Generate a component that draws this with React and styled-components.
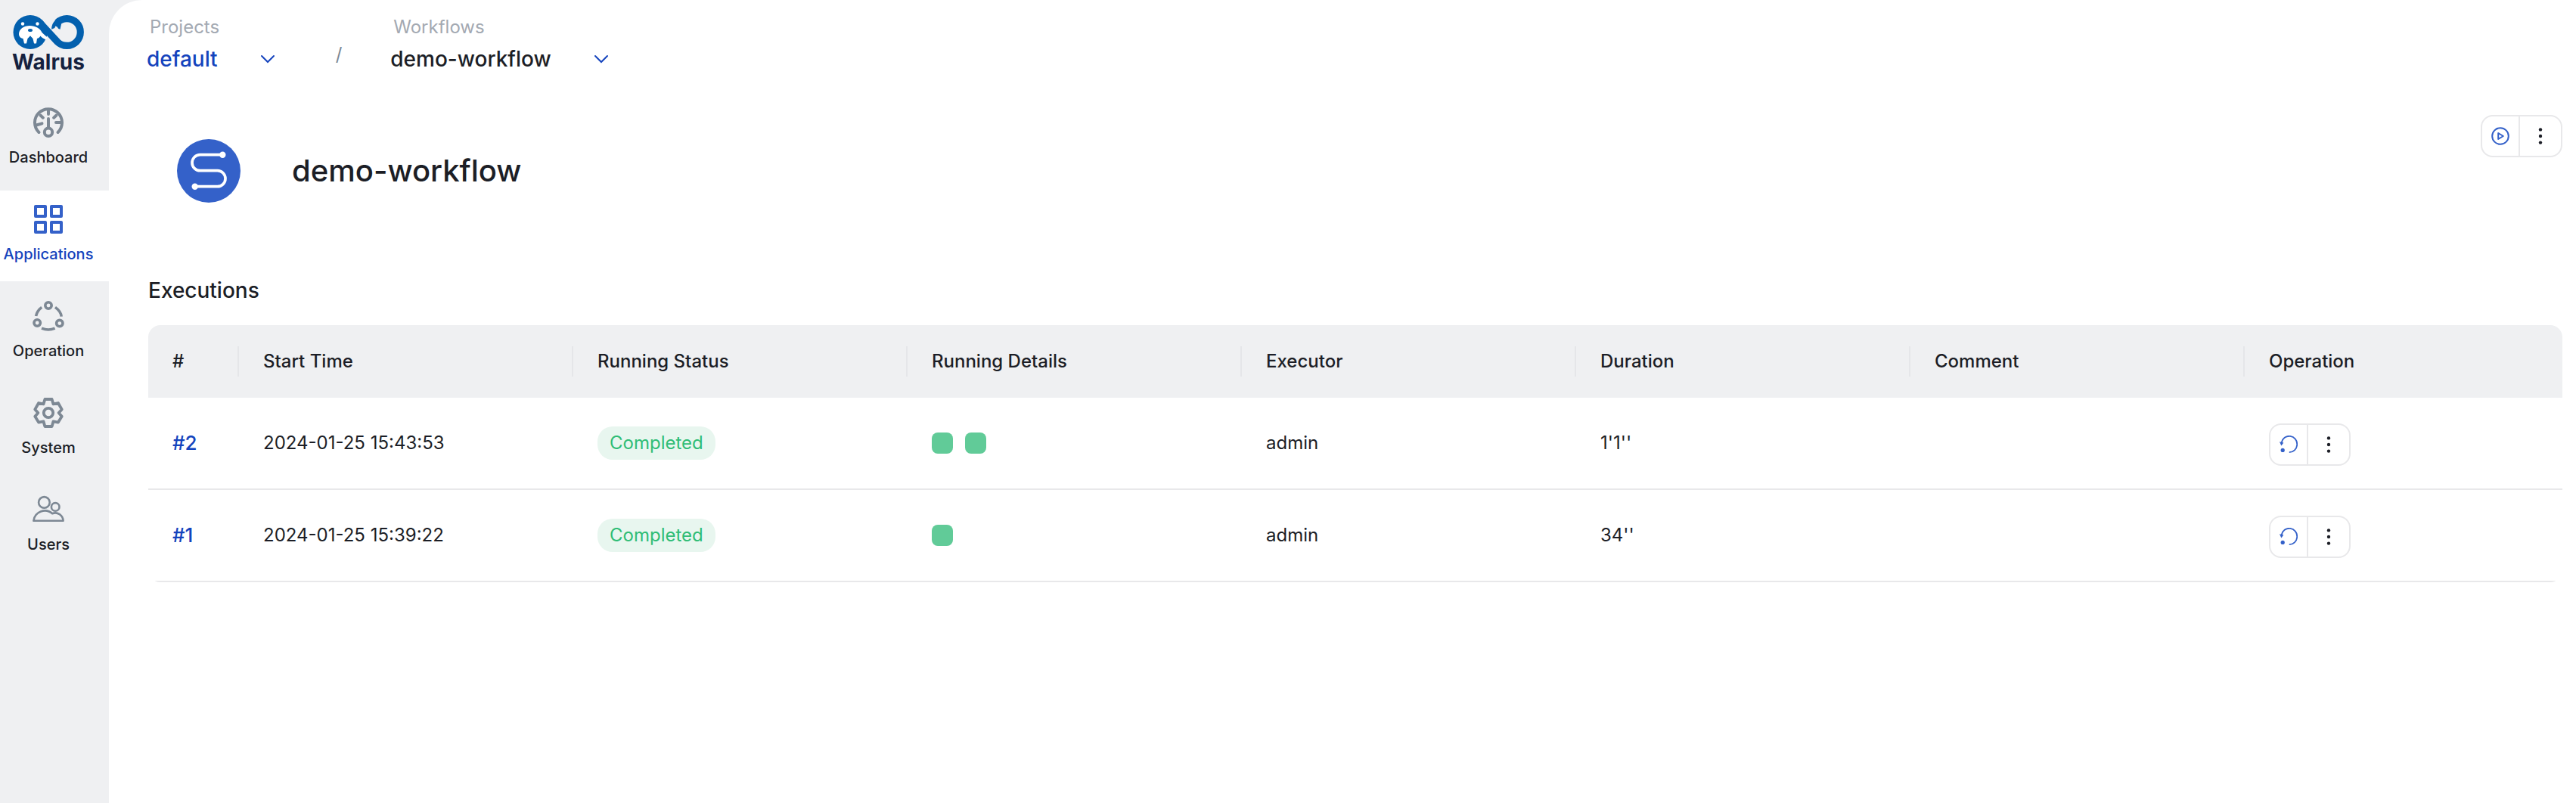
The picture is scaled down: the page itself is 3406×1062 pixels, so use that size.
import React from "react";
import styled, { createGlobalStyle } from "styled-components";

const color = {
  ink: "#1c1e26",
  muted: "#a3a9b2",
  icon: "#7d8894",
  primary: "#1443bd",
  accent: "#3461c9",
  panel: "#eff0f2",
  line: "#e8e8ea",
  success: "#2fbd76",
  successSoft: "#e8f6ef",
  successBlock: "#61cb98",
};

const GlobalStyle = createGlobalStyle`
  *, *::before, *::after { box-sizing: border-box; }
  body {
    margin: 0;
    background: ${color.panel};
    color: ${color.ink};
    font-family: Inter, "Liberation Sans", sans-serif;
    font-size: 24px;
    line-height: 32px;
  }
  button { font: inherit; color: inherit; background: none; border: 0; padding: 0; cursor: pointer; }
  a { color: inherit; text-decoration: none; }
  h1, h2 { margin: 0; font-weight: 500; }
  svg { display: block; }
`;

const Shell = styled.div`
  display: flex;
  min-height: 100vh;
`;

const Sidebar = styled.aside`
  flex: none;
  width: 144px;
`;

const Brand = styled.a`
  display: flex;
  flex-direction: column;
  width: 128px;
  height: 124px;
  padding-top: 20px;
  align-items: center;
  color: #15213f;
  font-size: 28px;
  font-weight: 700;
  line-height: 32px;
`;

const Nav = styled.nav`
  display: flex;
  flex-direction: column;
  gap: 8px;
`;

const NavItem = styled.a`
  display: flex;
  flex-direction: column;
  align-items: center;
  gap: 12px;
  height: 120px;
  padding: 18px 16px 0 0;
  background: ${(p) => (p.$active ? "#fff" : "transparent")};
  color: ${(p) => (p.$active ? color.primary : color.ink)};
  font-size: 20px;
  font-weight: 500;
  line-height: 28px;

  svg { color: ${(p) => (p.$active ? color.accent : color.icon)}; }
`;

const Main = styled.main`
  flex: 1;
  min-width: 0;
  padding: 20px 18px 40px 52px;
  background: #fff;
  border-top-left-radius: 44px;
`;

const Breadcrumb = styled.nav`
  display: flex;
  align-items: flex-start;
  height: 80px;
  margin-left: -2px;
`;

const Crumb = styled.div`
  display: flex;
  flex-direction: column;
  gap: 8px;
`;

const CrumbLabel = styled.span`
  padding-left: 4px;
  color: ${color.muted};
`;

const CrumbButton = styled.button`
  display: flex;
  align-items: center;
  gap: 56px;
  color: ${(p) => (p.$linked ? color.primary : color.ink)};
  font-size: 28px;
  font-weight: 500;
  line-height: 36px;

  svg { color: ${color.primary}; }
`;

const Slash = styled.span`
  margin: 36px 64px 0 80px;
  color: ${color.icon};
`;

const TitleBar = styled.header`
  display: flex;
  align-items: flex-start;
  justify-content: space-between;
  padding: 52px 0 0;
`;

const TitleGroup = styled.div`
  display: flex;
  align-items: center;
  gap: 68px;
  padding: 32px 0 0 38px;
`;

const Title = styled.h1`
  font-size: 40px;
  line-height: 48px;
`;

const ActionGroup = styled.div`
  display: flex;
  width: 108px;
  height: 56px;
  border: 2px solid ${color.line};
  border-radius: 16px;
`;

const ActionButton = styled.button`
  display: flex;
  flex: 1;
  align-items: center;
  justify-content: center;
  color: ${color.accent};

  & + & {
    flex: none;
    width: 56px;
    border-left: 2px solid ${color.line};
    color: ${color.ink};
  }
`;

const RowActions = styled.div`
  padding-top: 4px;
`;

const SectionTitle = styled.h2`
  margin-top: 96px;
  font-size: 28px;
  line-height: 40px;
`;

const Table = styled.table`
  width: 100%;
  margin-top: 26px;
  border-collapse: separate;
  border-spacing: 0;
  border-radius: 16px;
  overflow: hidden;
  table-layout: fixed;
`;

const IndexCol = styled.col`
  width: 120px;
`;

const OperationCol = styled.col`
  width: 420px;
`;

const HeadCell = styled.th`
  height: 96px;
  padding: 0;
  background: ${color.panel};
  font-weight: 500;
  text-align: left;

  &:last-child > div { border-right: 0; }
`;

const HeadLabel = styled.div`
  height: 40px;
  padding-left: 32px;
  border-right: 2px solid #e5e6e9;
  line-height: 40px;
`;

const Cell = styled.td`
  height: 122px;
  padding: 0 32px;
  border-bottom: 2px solid ${color.line};
`;

const RunLink = styled.a`
  color: ${color.primary};
  font-size: 26px;
  font-weight: 500;
`;

const Tag = styled.span`
  display: inline-block;
  padding: 0 16px;
  border-radius: 20px;
  background: ${color.successSoft};
  color: ${color.success};
  line-height: 44px;
`;

const Steps = styled.div`
  display: flex;
  gap: 16px;
`;

const Step = styled.span`
  width: 28px;
  height: 28px;
  border-radius: 8px;
  background: ${color.successBlock};
`;

const DashboardIcon = () => (
  <svg width="40" height="40" viewBox="0 0 40 40" fill="none" stroke="currentColor" strokeWidth="4" strokeLinecap="round">
    <path d="M7.4 33A18 18 0 1 1 32.6 33" />
    <path d="M20 3v6M9.500 10.500l3.400 3.200M30.500 10.500l-3.400 3.200M4 23.500l7.500-2.200M37 20h-7M20 15V26" />
    <circle cx="20" cy="32.800" r="5.200" />
  </svg>
);

const ApplicationsIcon = () => (
  <svg width="40" height="40" viewBox="0 0 40 40" fill="none" stroke="currentColor" strokeWidth="4" strokeLinejoin="round">
    <path d="M3 3h13v13H3zM24 3h13v13H24zM3 24h13v13H3zM24 24h13v13H24z" />
  </svg>
);

const OperationIcon = () => (
  <svg width="42" height="40" viewBox="0 0 42 40" fill="none" stroke="currentColor" strokeWidth="3.6">
    <circle cx="21" cy="6" r="4.2" />
    <circle cx="6.2" cy="29" r="4.2" />
    <circle cx="35.8" cy="29.6" r="4.2" />
    <path d="M4.6 20Q6 13 12.2 8.4M30 8.4Q37.4 13.6 38.2 20.6M12 36.2Q21 39.8 29.6 36.2" />
  </svg>
);

const SystemIcon = () => (
  <svg width="40" height="40" viewBox="0 0 40 40" fill="none" stroke="currentColor" strokeWidth="3.8" strokeLinejoin="round">
    <path d="M15.400 2h9.200l1.900 6.400 6.400-1.400 4.800 8.400-4 4.600 4 4.800-4.800 7.800-6.400-1.200-1.900 6.600h-9.200l-1.900-6.600-6.400 1.200-4.800-7.800 4-4.800-4-4.600L7.100 7l6.400 1.400z" />
    <circle cx="20" cy="20" r="6.200" />
  </svg>
);

const UsersIcon = () => (
  <svg width="42" height="40" viewBox="0 0 42 40" fill="none" stroke="currentColor" strokeWidth="2.6" strokeLinejoin="round">
    <circle cx="15.4" cy="10.4" r="7.3" />
    <circle cx="30.2" cy="16.4" r="5.3" />
    <path d="M1.4 34.800H40.600A10.500 11 0 0 0 26.200 25.200A15 15 0 0 0 1.400 34.800z" />
  </svg>
);

const ChevronIcon = () => (
  <svg width="20" height="12" viewBox="0 0 20 12" fill="none" stroke="currentColor" strokeWidth="2" strokeLinecap="round">
    <path d="M2 2l8 8 8-8" />
  </svg>
);

const PlayIcon = () => (
  <svg width="24" height="24" viewBox="0 0 24 24" fill="none" stroke="currentColor" strokeWidth="2" strokeLinejoin="round">
    <circle cx="12" cy="12" r="10.8" />
    <path d="M9.200 8v8l6.600-4z" />
  </svg>
);

const MoreIcon = () => (
  <svg width="24" height="24" viewBox="0 0 24 24" fill="currentColor">
    <circle cx="12" cy="3.4" r="2.2" />
    <circle cx="12" cy="12" r="2.2" />
    <circle cx="12" cy="20.6" r="2.2" />
  </svg>
);

const RerunIcon = () => (
  <svg width="24" height="24" viewBox="0 0 24 24" fill="none" stroke="currentColor" strokeWidth="1.8">
    <path d="M2.600 9.500A10.400 10.700 0 1 1 12.800 22.200" />
    <path d="M0 8.200l5.400 1.200-3 4z" fill="currentColor" stroke="none" />
    <circle cx="4.200" cy="19.400" r="2.600" fill="currentColor" stroke="none" />
  </svg>
);

const WorkflowIcon = () => (
  <svg width="84" height="84" viewBox="0 0 84 84" fill="none" stroke="#fff" strokeWidth="3.7">
    <circle cx="42" cy="42" r="42" fill={color.accent} stroke="none" />
    <path d="M60 20.700H30.500a10.500 10.500 0 0 0 0 21H53.500a10.500 10.500 0 0 1 0 21H24" />
    <circle cx="60.300" cy="20.700" r="4.200" fill="#fff" stroke="none" />
    <circle cx="23.700" cy="62.700" r="4.200" fill="#fff" stroke="none" />
  </svg>
);

const WalrusLogo = () => (
  <svg width="94" height="46" viewBox="0 0 94 46" fill="none">
    <circle cx="23" cy="22.500" r="22.500" fill="#0360ae" />
    <path d="M35.500 9.800L58.800 35.200A17.900 17.900 0 1 0 58.800 9.800" stroke="#0360ae" strokeWidth="9.200" />
    <path d="M51.200 18.700C51 13 54 8.500 57.500 5.500L64 12l-1.500 6.700-2.200-.6-1.800-2.600-2.200-1-1 2.600z" fill="#0360ae" />
    <path d="M8 25c0-6.500 6.500-11 14.300-11S36 17.500 38.500 23l7 6.500-1.700 3C40 31 37.500 29 36.500 27.500c-1 2-2.500 3-4.500 3.500l-1 6.500h-3L26.500 31 23 27.500 19.500 31 18 37.500h-3L13.500 31C10 30.500 8 28 8 25z" fill="#fff" />
    <circle cx="13" cy="11.500" r="2.200" fill="#fff" />
    <circle cx="32.500" cy="11.500" r="2.200" fill="#fff" />
    <ellipse cx="23" cy="20" rx="3" ry="2" fill="#0360ae" />
    <path d="M20.500 31l2.500-3.500 2.500 3.500z" fill="#0360ae" />
  </svg>
);

const navItems = [
  { label: "Dashboard", Icon: DashboardIcon },
  { label: "Applications", Icon: ApplicationsIcon, active: true },
  { label: "Operation", Icon: OperationIcon },
  { label: "System", Icon: SystemIcon },
  { label: "Users", Icon: UsersIcon },
];

const columns = ["#", "Start Time", "Running Status", "Running Details", "Executor", "Duration", "Comment", "Operation"];

const executions = [
  { id: 2, start: "2024-01-25 15:43:53", status: "Completed", steps: 2, executor: "admin", duration: "1'1''", comment: "" },
  { id: 1, start: "2024-01-25 15:39:22", status: "Completed", steps: 1, executor: "admin", duration: "34''", comment: "" },
];

function Actions({ label, children }) {
  return (
    <ActionGroup>
      <ActionButton type="button" aria-label={label}>{children}</ActionButton>
      <ActionButton type="button" aria-label="More"><MoreIcon /></ActionButton>
    </ActionGroup>
  );
}

export default function App() {
  return (
    <>
      <GlobalStyle />
      <Shell>
        <Sidebar>
          <Brand href="#">
            <WalrusLogo />
            Walrus
          </Brand>
          <Nav aria-label="Main">
            {navItems.map(({ label, Icon, active }) => (
              <NavItem key={label} href="#" $active={active} aria-current={active ? "page" : undefined}>
                <Icon />
                {label}
              </NavItem>
            ))}
          </Nav>
        </Sidebar>
        <Main>
          <Breadcrumb aria-label="Breadcrumb">
            <Crumb>
              <CrumbLabel id="crumb-project">Projects</CrumbLabel>
              <CrumbButton type="button" $linked aria-describedby="crumb-project">default<ChevronIcon /></CrumbButton>
            </Crumb>
            <Slash>/</Slash>
            <Crumb>
              <CrumbLabel id="crumb-workflow">Workflows</CrumbLabel>
              <CrumbButton type="button" aria-describedby="crumb-workflow">demo-workflow<ChevronIcon /></CrumbButton>
            </Crumb>
          </Breadcrumb>
          <TitleBar>
            <TitleGroup>
              <WorkflowIcon />
              <Title>demo-workflow</Title>
            </TitleGroup>
            <Actions label="Run"><PlayIcon /></Actions>
          </TitleBar>
          <SectionTitle>Executions</SectionTitle>
          <Table>
            <colgroup>
              <IndexCol />
              {columns.slice(1, -1).map((name) => <col key={name} />)}
              <OperationCol />
            </colgroup>
            <thead>
              <tr>
                {columns.map((name) => (
                  <HeadCell key={name} scope="col"><HeadLabel>{name}</HeadLabel></HeadCell>
                ))}
              </tr>
            </thead>
            <tbody>
              {executions.map((run) => (
                <tr key={run.id}>
                  <Cell><RunLink href="#">#{run.id}</RunLink></Cell>
                  <Cell>{run.start}</Cell>
                  <Cell><Tag>{run.status}</Tag></Cell>
                  <Cell>
                    <Steps>
                      {Array.from({ length: run.steps }, (_, i) => <Step key={i} />)}
                    </Steps>
                  </Cell>
                  <Cell>{run.executor}</Cell>
                  <Cell>{run.duration}</Cell>
                  <Cell>{run.comment}</Cell>
                  <Cell>
                    <RowActions>
                      <Actions label="Run again"><RerunIcon /></Actions>
                    </RowActions>
                  </Cell>
                </tr>
              ))}
            </tbody>
          </Table>
        </Main>
      </Shell>
    </>
  );
}
